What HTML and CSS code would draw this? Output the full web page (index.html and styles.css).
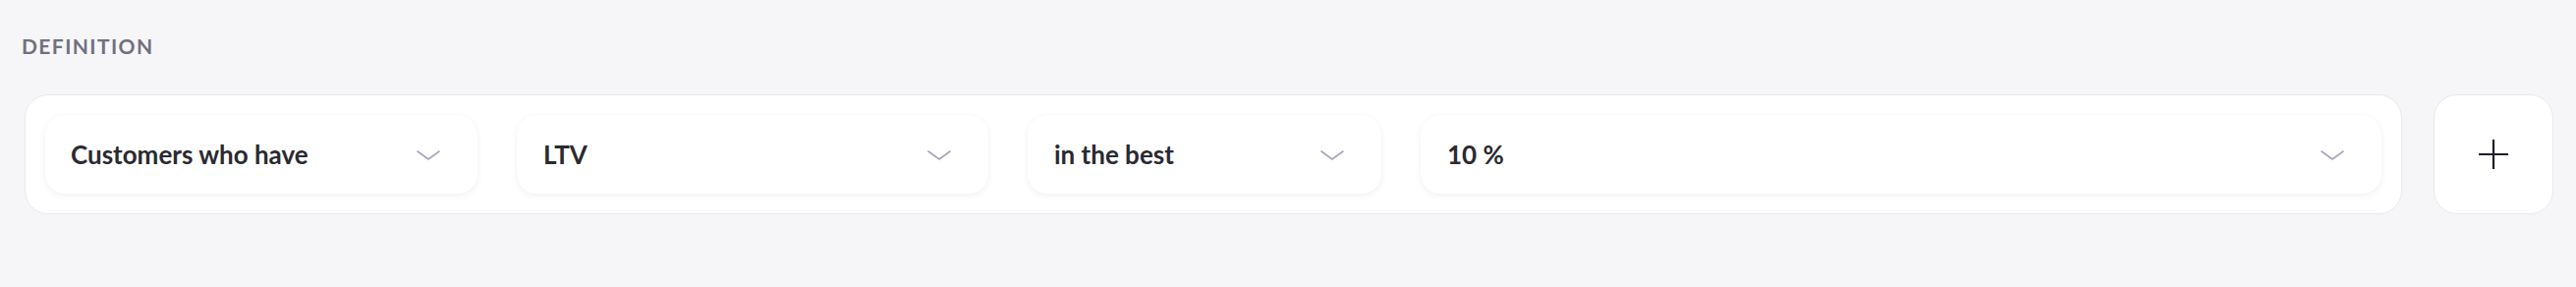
FILE: index.html
```html
<!DOCTYPE html>
<html lang="en">
<head>
<meta charset="utf-8">
<title>Definition</title>
<link rel="stylesheet" href="styles.css">
</head>
<body>
<section class="definition">
  <h2 class="label">DEFINITION</h2>
  <div class="row">
    <div class="rule">
      <div class="select select-who">
        <span class="value">Customers who have</span>
        <svg class="chev" viewBox="0 0 24 10" width="24" height="10"><path d="M1 1 L12 9 L23 1" /></svg>
      </div>
      <div class="select select-metric">
        <span class="value">LTV</span>
        <svg class="chev" viewBox="0 0 24 10" width="24" height="10"><path d="M1 1 L12 9 L23 1" /></svg>
      </div>
      <div class="select select-op">
        <span class="value">in the best</span>
        <svg class="chev" viewBox="0 0 24 10" width="24" height="10"><path d="M1 1 L12 9 L23 1" /></svg>
      </div>
      <div class="select select-val">
        <span class="value">10 %</span>
        <svg class="chev" viewBox="0 0 24 10" width="24" height="10"><path d="M1 1 L12 9 L23 1" /></svg>
      </div>
    </div>
    <button class="add" type="button" aria-label="Add">
      <svg viewBox="0 0 30 30" width="30" height="30"><path d="M15 0 V30 M0 15 H30" /></svg>
    </button>
  </div>
</section>
</body>
</html>
```
FILE: styles.css
```css
html, body {
  margin: 0;
  padding: 0;
  background: #f6f6f8;
}
body {
  font-family: Lato, "Noto Sans", sans-serif;
  width: 2622px;
  height: 292px;
  overflow: hidden;
}
.definition {
  padding: 34px 23px 0 25px;
}
.label {
  margin: 0 0 37px -3px;
  font-size: 21px;
  line-height: 1.2;
  font-weight: 700;
  letter-spacing: 1.4px;
  color: #71707e;
}
.row {
  display: flex;
  gap: 32px;
  align-items: stretch;
}
.rule {
  flex: 1;
  display: flex;
  gap: 40px;
  padding: 20px;
  background: #fff;
  border: 1px solid #eaeaee;
  border-radius: 24px;
}
.select {
  height: 80px;
  box-sizing: border-box;
  display: flex;
  align-items: center;
  justify-content: space-between;
  padding: 0 38px 0 27px;
  background: #fff;
  border-radius: 20px;
  box-shadow: 0 2px 7px rgba(30, 30, 60, 0.06), 0 0 1px rgba(30, 30, 60, 0.04);
}
.select-who { width: 440px; padding-left: 26px; }
.select-metric { width: 480px; }
.select-op { width: 360px; }
.select-val { flex: 1; }
.value {
  font-size: 26px;
  font-weight: 700;
  color: #2a2a30;
  white-space: nowrap;
}
.chev {
  flex: none;
  margin-top: 1px;
}
.chev path {
  fill: none;
  stroke: #a7a5b8;
  stroke-width: 1.6;
  stroke-linecap: round;
  stroke-linejoin: round;
}
.add {
  flex: none;
  width: 122px;
  height: 122px;
  box-sizing: border-box;
  display: flex;
  align-items: center;
  justify-content: center;
  padding: 0;
  background: #fff;
  border: 1px solid #eaeaee;
  border-radius: 24px;
}
.add path {
  fill: none;
  stroke: #1e1c2c;
  stroke-width: 2.2;
}
```
